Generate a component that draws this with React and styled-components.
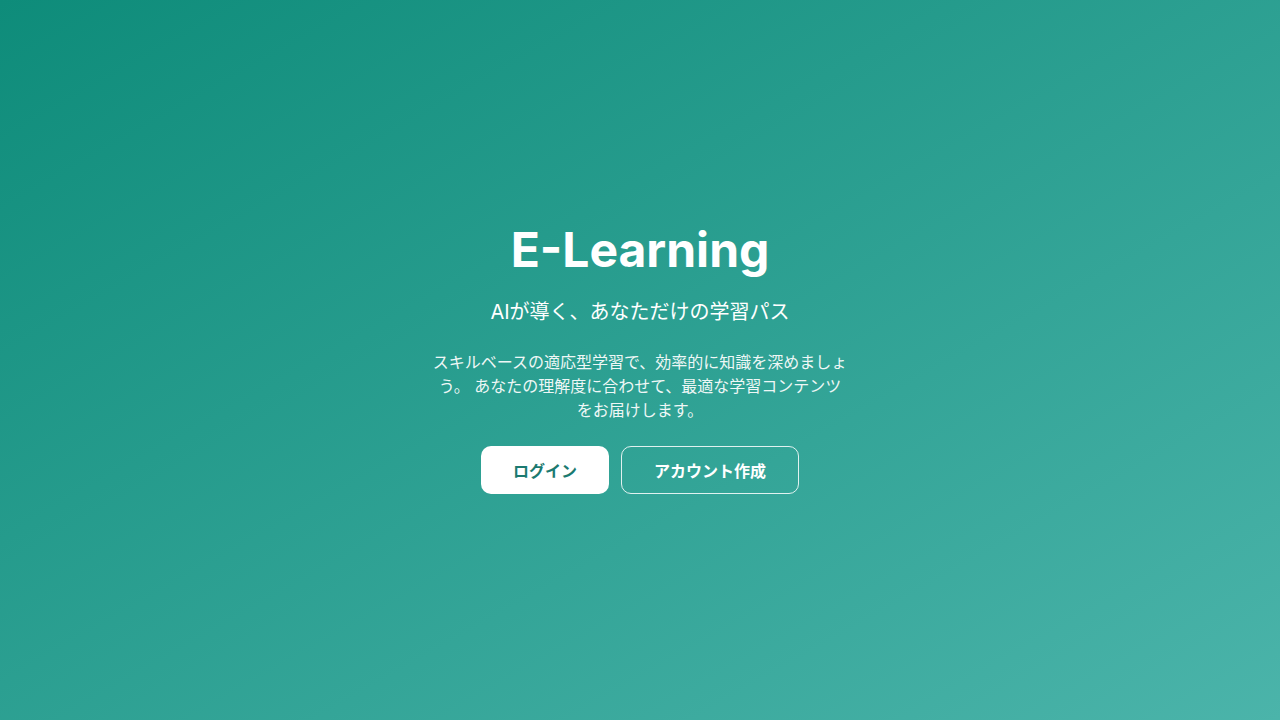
import React from "react";
import styled, { createGlobalStyle } from "styled-components";

const GlobalStyle = createGlobalStyle`
  * { box-sizing: border-box; }
  html, body, #root { margin: 0; height: 100%; }
  body {
    font-family: Inter, "Noto Sans CJK JP", sans-serif;
  }
`;

const Page = styled.main`
  min-height: 100vh;
  display: flex;
  align-items: center;
  justify-content: center;
  background: linear-gradient(to bottom right, #0e8c7a, #4bb4aa);
  color: #fff;
`;

const Hero = styled.section`
  display: flex;
  flex-direction: column;
  align-items: center;
  text-align: center;
`;

const Title = styled.h1`
  margin: 0 0 24px;
  font-size: 48px;
  line-height: 1;
  font-weight: 700;
`;

const Subtitle = styled.p`
  margin: 0 0 24px;
  font-size: 20px;
  line-height: 28px;
  font-weight: 400;
`;

const Lead = styled.p`
  margin: 0 0 24px;
  width: 416px;
  font-size: 16px;
  line-height: 24px;
  opacity: 0.92;
`;

const Actions = styled.div`
  display: flex;
  gap: 12px;
`;

const Button = styled.button`
  height: 48px;
  padding: 0 32px;
  border-radius: 10px;
  font-family: inherit;
  font-size: 16px;
  font-weight: 700;
  cursor: pointer;
  border: ${(p) => (p.$primary ? "none" : "1px solid rgba(255,255,255,0.85)")};
  background: ${(p) => (p.$primary ? "#fff" : "transparent")};
  color: ${(p) => (p.$primary ? "#1b7a70" : "#fff")};
`;

export default function App() {
  return (
    <>
      <GlobalStyle />
      <Page>
        <Hero>
          <Title>E-Learning</Title>
          <Subtitle>AIが導く、あなただけの学習パス</Subtitle>
          <Lead>
            スキルベースの適応型学習で、効率的に知識を深めましょう。
            あなたの理解度に合わせて、最適な学習コンテンツをお届けします。
          </Lead>
          <Actions>
            <Button $primary>ログイン</Button>
            <Button>アカウント作成</Button>
          </Actions>
        </Hero>
      </Page>
    </>
  );
}
